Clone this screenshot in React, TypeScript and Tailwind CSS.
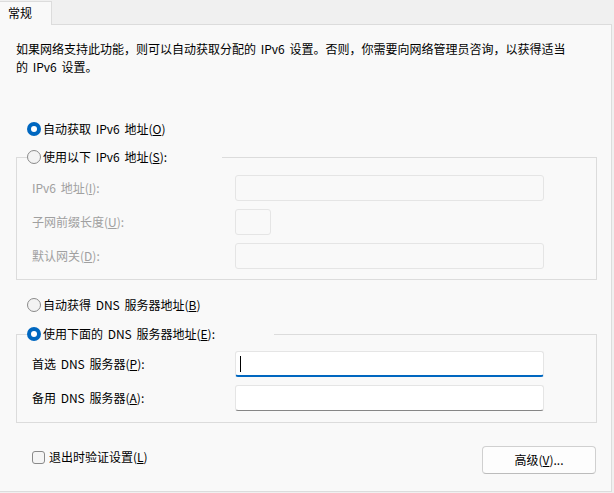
import React from "react";

const FONT = "font-['Noto_Sans_CJK_SC','Noto_Sans',sans-serif]";

function Radio({ checked }: { checked?: boolean }) {
  return checked ? (
    <div className="w-[14px] h-[14px] rounded-full bg-[#0067c0] flex items-center justify-center shrink-0">
      <div className="w-[6px] h-[6px] rounded-full bg-white" />
    </div>
  ) : (
    <div className="w-[14px] h-[14px] rounded-full border border-[#8a8a8a] bg-[#f3f3f3] shrink-0" />
  );
}

function RadioRow({ checked, children }: { checked?: boolean; children: React.ReactNode }) {
  return (
    <div className="flex items-center gap-[2px] h-[18px] leading-[18px]">
      <Radio checked={checked} />
      <span>{children}</span>
    </div>
  );
}

function DisabledRow({ label, short }: { label: React.ReactNode; short?: boolean }) {
  return (
    <div className="flex items-center h-[26px]">
      <div className="w-[203px] text-[#a0a0a0]">{label}</div>
      <div
        className={`h-[26px] ${short ? "w-[36px]" : "w-[309px]"} rounded-[3px] border border-[#e5e5e5] bg-[#f9f9f9]`}
      />
    </div>
  );
}

export default function App() {
  return (
    <div className={`w-[614px] h-[493px] bg-[#f0f0f0] text-[12px] leading-[18px] text-black ${FONT} [word-spacing:2px] flex flex-col`}>
      {/* tab row */}
      <div className="flex h-[25px] w-[612px]">
        <div className="w-[52px] h-[24px] mt-[1px] bg-[#f9f9f9] border-t border-r border-[#dcdcdc] pl-[8px] leading-[22px]">
          常规
        </div>
        <div className="flex-1 h-[25px] border-b border-[#dcdcdc]" />
      </div>

      {/* panel */}
      <div className="w-[612px] h-[467px] bg-[#f9f9f9] border-r border-b border-[#dcdcdc] pl-[16px] pr-[14px] pt-[15px] flex flex-col">
        <p className="leading-[18px]">
          如果网络支持此功能，则可以自动获取分配的 IPv6 设置。否则，你需要向网络管理员咨询，以获得适当
          <br />
          的 IPv6 设置。
        </p>

        <div className="mt-[44px] ml-[11px]">
          <RadioRow checked>
            自动获取 IPv6 地址(<u>O</u>)
          </RadioRow>
        </div>

        <fieldset className="mt-[10px] border border-[#dcdcdc] p-0">
          <legend className="ml-[10px] w-[195px]">
            <RadioRow>
              使用以下 IPv6 地址(<u>S</u>):
            </RadioRow>
          </legend>
          <div className="flex flex-col gap-[8px] pl-[15px] pt-[9px] pb-[10px]">
            <DisabledRow label={<>IPv6 地址(<u>I</u>):</>} />
            <DisabledRow label={<>子网前缀长度(<u>U</u>):</>} short />
            <DisabledRow label={<>默认网关(<u>D</u>):</>} />
          </div>
        </fieldset>

        <div className="mt-[16px] ml-[11px]">
          <RadioRow>
            自动获得 DNS 服务器地址(<u>B</u>)
          </RadioRow>
        </div>

        <fieldset className="mt-[11px] border border-[#dcdcdc] p-0">
          <legend className="ml-[10px] w-[247px]">
            <RadioRow checked>
              使用下面的 DNS 服务器地址(<u>E</u>):
            </RadioRow>
          </legend>
          <div className="flex flex-col gap-[8px] pl-[15px] pt-[8px] pb-[11px]">
            <div className="flex items-center h-[26px]">
              <div className="w-[203px]">
                首选 DNS 服务器(<u>P</u>):
              </div>
              <div className="h-[26px] w-[309px] rounded-[3px] border border-[#e5e5e5] border-b-2 border-b-[#0067c0] bg-white flex items-center pl-[4px]">
                <div className="w-[1px] h-[16px] bg-black" />
              </div>
            </div>
            <div className="flex items-center h-[26px]">
              <div className="w-[203px]">
                备用 DNS 服务器(<u>A</u>):
              </div>
              <div className="h-[26px] w-[309px] rounded-[3px] border border-[#e5e5e5] border-b-[#868686] bg-white" />
            </div>
          </div>
        </fieldset>

        <div className="mt-[23px] flex justify-between items-start">
          <div className="mt-[2px] ml-[16px] flex items-center gap-[4px] h-[18px]">
            <div className="w-[13px] h-[13px] rounded-[3px] border border-[#8a8a8a] bg-[#f5f5f5]" />
            <span>
              退出时验证设置(<u>L</u>)
            </span>
          </div>
          <button className="w-[114px] h-[28px] mr-[1px] rounded-[4px] border border-[#d0d0d0] border-b-[#bcbcbc] bg-[#fdfdfd] text-[12px] leading-[18px]">
            高级(<u>V</u>)...
          </button>
        </div>
      </div>
    </div>
  );
}
